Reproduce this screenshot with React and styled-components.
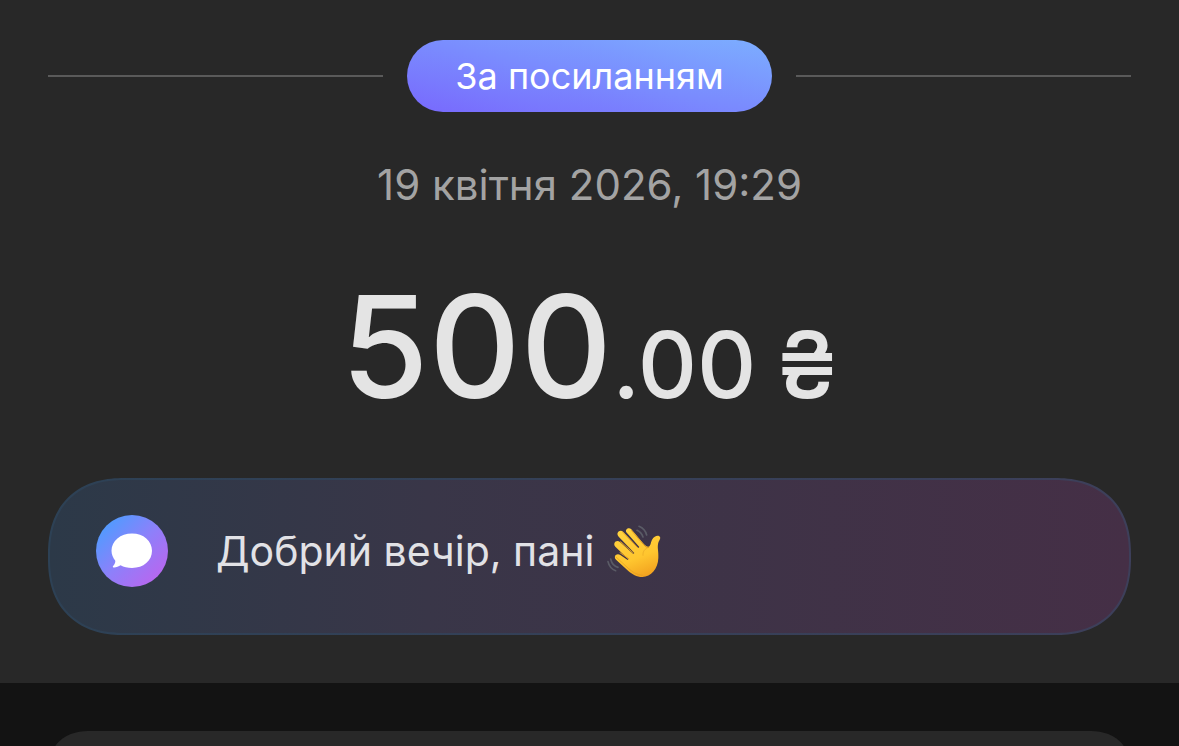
import React from "react";
import styled, { createGlobalStyle } from "styled-components";

const App = () => {
  const [whole, fraction] = ["500", ".00"];

  return (
    <Page>
      <GlobalStyle />
      <Receipt>
        <BadgeRow>
          <Line />
          <Badge>За посиланням</Badge>
          <Line />
        </BadgeRow>
        <DateText>19 квітня 2026, 19:29</DateText>
        <Amount>
          {whole}
          <Fraction>{fraction}</Fraction>
          <Currency>₴</Currency>
        </Amount>
        <Message>
          <MessageIcon>
            <BubbleIcon />
          </MessageIcon>
          <MessageText>
            Добрий вечір, пані <WaveIcon />
          </MessageText>
        </Message>
      </Receipt>
      <Below>
        <NextCard />
      </Below>
    </Page>
  );
};

const BubbleIcon = () => (
  <svg width="42" height="36" viewBox="0 0 42 36" aria-hidden="true">
    <path
      fill="#fff"
      d="M21 0.5C32.5 0.5 41 7.8 41 17.8S32.5 35 21 35c-4.300 0-8.300-1-11.500-2.700C7.600 33.700 4.800 34.600 2.500 34.400c-.8-.1-.9-.8-.4-1.400 1.600-1.800 2.400-3.600 2.200-5.300C2 25 .5 21.500.5 17.800.5 7.800 9.500.5 21 .5z"
    />
  </svg>
);

const WaveIcon = () => (
  <WaveSvg viewBox="50 42 168 162" role="img" aria-label="👋">
    <defs>
      <linearGradient id="skin" gradientUnits="userSpaceOnUse" x1="110" y1="60" x2="165" y2="200">
        <stop offset="0" stopColor="#ffd23f" />
        <stop offset="0.6" stopColor="#ffc62f" />
        <stop offset="1" stopColor="#f2a21f" />
      </linearGradient>
    </defs>
    <path
      fill="url(#skin)"
      d="M111 67c-5-8 7-17 15-9l34 40c6 7 13 13 18 12 7-2 5-12 11-22 6-11 19-14 23-7 3 6-5 12-6 22-2 12 2 23 1 41-1 32-22 57-48 57-18 0-30-8-42-18l-36-33c-11-11 1-22 12-15l22 15 2-2-39-38c-9-10 3-23 14-14l40 36 3-3-47-49c-10-10 3-24 14-14l45 48 3-3z"
    />
    <g fill="none" stroke="#e09a22" strokeWidth="3" strokeLinecap="round">
      <path d="M100 66l44 46" />
      <path d="M94 95l38 34" />
      <path d="M92 128l26 18" />
      <path d="M127 62l36 42c6 7 10 9 15 8" />
      <path d="M178 112c-12 4-18 12-17 24" opacity="0.5" />
      <path d="M80 141l37 34c12 10 24 20 42 21" opacity="0.6" />
    </g>
    <g fill="none" stroke="#5a5b66" strokeWidth="5" strokeLinecap="round">
      <path d="M149 49c12 5 20 14 23 26" />
      <path d="M143 61c9 4 15 11 18 20" />
      <path d="M64 147c3 13 10 22 22 25" />
      <path d="M56 155c3 13 11 23 23 27" />
    </g>
  </WaveSvg>
);

const GlobalStyle = createGlobalStyle`
  * {
    box-sizing: border-box;
  }
  body {
    margin: 0;
    background-color: #131313;
    font-family: Inter, "Liberation Sans", sans-serif;
  }
`;

const Page = styled.div`
  display: flex;
  flex-direction: column;
  height: 100vh;
  overflow: hidden;
`;

const Receipt = styled.main`
  display: flex;
  flex-direction: column;
  flex-shrink: 0;
  padding: 40px 48px 48px;
  background-color: #282828;
`;

const BadgeRow = styled.div`
  display: flex;
  align-items: center;
  gap: 24px;
`;

const Line = styled.hr`
  flex: 1;
  margin: 0;
  border: 0;
  border-top: 2px solid #5a5a5a;
`;

const Badge = styled.div`
  padding: 0 48px;
  border-radius: 36px;
  background: linear-gradient(to top right, #7869fd, #7caeff);
  color: white;
  font-size: 36px;
  line-height: 72px;
`;

const DateText = styled.time`
  margin-top: 48px;
  color: #a3a3a3;
  font-size: 42px;
  line-height: 50px;
  text-align: center;
`;

const Amount = styled.h1`
  margin: 50px 0 0;
  color: #e4e4e4;
  font-size: 142px;
  font-weight: 500;
  line-height: 172px;
  text-align: center;
`;

const Fraction = styled.span`
  font-size: 92px;
  line-height: 1;
`;

const Currency = styled.span`
  margin-left: 20px;
  font-size: 92px;
  line-height: 1;
`;

const Message = styled.section`
  display: flex;
  align-items: flex-start;
  gap: 48px;
  margin-top: 46px;
  padding: 35px 46px 46px;
  border: 2px solid transparent;
  border-radius: 76px;
  corner-shape: superellipse(1.2);
  background:
    linear-gradient(to right, #2c3948, #393648 35%, #452f46) padding-box,
    linear-gradient(to right, #2d4155, #3d3f5a) border-box;
`;

const MessageIcon = styled.div`
  display: flex;
  justify-content: center;
  align-items: center;
  width: 72px;
  height: 72px;
  border-radius: 50%;
  background: linear-gradient(135deg, #4c9dff 10%, #8d80fa 50%, #c062ed 95%);
`;

const MessageText = styled.p`
  margin: 0;
  color: #e2e2e6;
  font-size: 41px;
  line-height: 72px;
`;

const WaveSvg = styled.svg`
  width: 56px;
  height: 54px;
  vertical-align: -12px;
`;

const Below = styled.div`
  flex: 1;
  min-height: 0;
  padding: 48px 48px 0;
  overflow: hidden;
`;

const NextCard = styled.section`
  height: 160px;
  border-radius: 44px;
  corner-shape: superellipse(1.3);
  background-color: #282828;
`;

export default App;
